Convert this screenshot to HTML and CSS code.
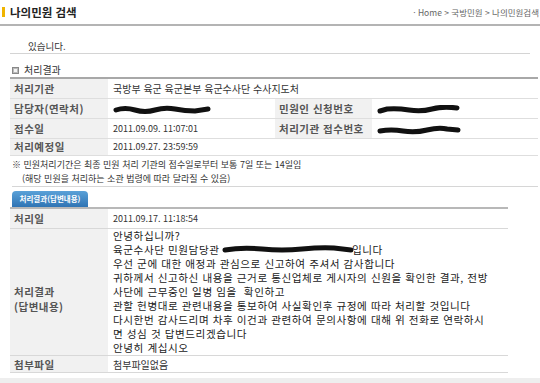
FILE: index.html
```html
<!DOCTYPE html>
<html lang="ko">
<head>
    <meta charset="UTF-8">
    <title>나의민원 검색</title>
    <link rel="stylesheet" href="styles.css">
</head>
<body>
    <div class="top">
        <h1 class="title">나의민원 검색</h1>
        <div class="crumb">· Home &gt; 국방민원 &gt; 나의민원검색</div>
    </div>

    <p class="lead">있습니다.</p>

    <h2 class="section"><span class="sec-icon"></span>처리결과</h2>
    <table class="info">
        <colgroup>
            <col class="c-label"><col class="c-value"><col class="c-label2"><col>
        </colgroup>
        <tr>
            <th>처리기관</th>
            <td colspan="3">국방부 육군 육군본부 육군수사단 수사지도처</td>
        </tr>
        <tr>
            <th>담당자(연락처)</th>
            <td><svg class="scribble" width="98" height="10" viewBox="0 0 98 10"><path d="M3 5 Q12 2 22 5 T42 5 T62 4 T82 6 L95 4" /></svg></td>
            <th>민원인 신청번호</th>
            <td><svg class="scribble" width="84" height="10" viewBox="0 0 84 10"><path d="M3 6 L10 4 Q20 3 32 5 T55 4 T80 3" /></svg></td>
        </tr>
        <tr>
            <th>접수일</th>
            <td class="date">2011.09.09. 11:07:01</td>
            <th>처리기관 접수번호</th>
            <td><svg class="scribble" width="84" height="10" viewBox="0 0 84 10"><path d="M3 6 Q14 4 26 6 T50 5 T70 4 L81 5" /></svg></td>
        </tr>
        <tr>
            <th>처리예정일</th>
            <td colspan="3" class="date">2011.09.27. 23:59:59</td>
        </tr>
    </table>

    <div class="note">
        <p>※ 민원처리기간은 최종 민원 처리 기관의 접수일로부터 보통 7일 또는 14일임</p>
        <p class="indent">(해당 민원을 처리하는 소관 법령에 따라 달라질 수 있음)</p>
    </div>

    <div class="tab">처리결과(답변내용)</div>
    <table class="answer">
        <colgroup>
            <col class="c-label"><col>
        </colgroup>
        <tr>
            <th>처리일</th>
            <td class="date">2011.09.17. 11:18:54</td>
        </tr>
        <tr>
            <th class="mid">처리결과<br>(답변내용)</th>
            <td class="reply">안녕하십니까?<br>육군수사단 민원담당관 <svg class="scribble wide" width="132" height="9" viewBox="0 0 132 9"><path d="M3 5 Q20 2 40 4 T80 4 T112 3 L129 5" /></svg>입니다<br>우선 군에 대한 애정과 관심으로 신고하여 주셔서 감사합니다<br>귀하께서 신고하신 내용을 근거로 통신업체로 게시자의 신원을 확인한 결과, 전방<br>사단에 근무중인 일병 임을 &nbsp;확인하고<br>관할 헌병대로 관련내용을 통보하여 사실확인후 규정에 따라 처리할 것입니다<br>다시한번 감사드리며 차후 이건과 관련하여 문의사항에 대해 위 전화로 연락하시<br>면 성심 것 답변드리겠습니다<br>안녕히 계십시오</td>
        </tr>
        <tr>
            <th>첨부파일</th>
            <td>첨부파일없음</td>
        </tr>
    </table>

    <div class="footer-bar"></div>
</body>
</html>
```

FILE: styles.css
```css
body {
    margin: 0;
    font-family: "Noto Sans CJK KR", "Noto Sans", sans-serif;
    color: #333333;
    background-color: #ffffff;
    width: 540px;
    overflow: hidden;
}
.top {
    display: flex;
    justify-content: space-between;
    align-items: center;
    height: 24px;
    border-bottom: 2px solid #b4b4b4;
    padding: 0 0 0 2px;
}
.title {
    margin: 0;
    font-size: 11.5px;
    font-weight: bold;
    color: #222222;
    border-left: 3px solid #f0b400;
    padding-left: 5px;
    line-height: 10px;
    height: 10px;
}
.crumb {
    font-size: 8.5px;
    color: #666666;
    padding-right: 1px;
}
.lead {
    margin: 0 10px 0 10px;
    padding: 13px 0 0 18px;
    height: 14px;
    font-size: 9.5px;
    line-height: 14px;
    border-bottom: 1px solid #d4d4d4;
    width: 502px;
}
.section {
    margin: 9px 0 0 12px;
    font-size: 10px;
    font-weight: normal;
    color: #333333;
    height: 14px;
    line-height: 14px;
    display: flex;
    align-items: center;
}
.sec-icon {
    display: inline-block;
    width: 5px;
    height: 5px;
    border: 1px solid #888888;
    background-color: #f4f4f4;
    box-shadow: inset 0 0 0 1px #bbbbbb;
    margin-right: 5px;
}
table {
    border-collapse: collapse;
    margin-left: 10px;
}
.info {
    width: 528px;
    border-top: 2px solid #a8a8a8;
}
.answer {
    width: 498px;
    border-top: 2px solid #b8b8b8;
}
.c-label {
    width: 98px;
}
.c-value {
    width: 167px;
}
.c-label2 {
    width: 97px;
}
th {
    background-color: #f1f1f1;
    text-align: left;
    font-size: 10.5px;
    font-weight: bold;
    color: #555555;
    padding: 0 0 0 4px;
    letter-spacing: 0.5px;
}
td {
    font-size: 10px;
    color: #333333;
    padding: 0 0 0 5px;
}
.info tr {
    height: 20px;
    border-bottom: 1px solid #dedede;
}
.info tr:last-child {
    height: 17px;
}
.info th + td + th {
    padding-left: 4px;
}
.date {
    font-size: 9px;
}
.scribble {
    display: inline-block;
    vertical-align: middle;
}
.scribble path {
    fill: none;
    stroke: #111111;
    stroke-width: 5;
    stroke-linecap: round;
}
.scribble.wide {
    margin: 0 -2px 0 -1px;
    vertical-align: 0;
}
.note {
    margin: 2px 0 0 12px;
    font-size: 9px;
    color: #333333;
    width: 526px;
    border-bottom: 1px solid #d6d6d6;
    padding-bottom: 0;
}
.note p {
    margin: 0;
    line-height: 14px;
}
.note .indent {
    padding-left: 10px;
}
.tab {
    margin: 4px 0 0 12px;
    width: 76px;
    height: 16px;
    line-height: 16px;
    text-align: center;
    font-size: 7.5px;
    font-weight: bold;
    color: #ffffff;
    border-radius: 4px 4px 0 0;
    background: linear-gradient(#5aa1d8, #2f74b4);
}
.answer tr {
    border-bottom: 1px solid #d8d8d8;
}
.answer tr:first-child {
    height: 21px;
}
.answer tr:last-child {
    height: 17px;
}
.answer .mid {
    vertical-align: middle;
    padding-top: 14px;
    line-height: 15px;
}
.reply {
    font-size: 10.6px;
    line-height: 14px;
    letter-spacing: 0.55px;
    padding: 0 0 0 5px;
    color: #222222;
}
.footer-bar {
    margin-top: 5px;
    height: 10px;
    background-color: #eeeeee;
}
```
